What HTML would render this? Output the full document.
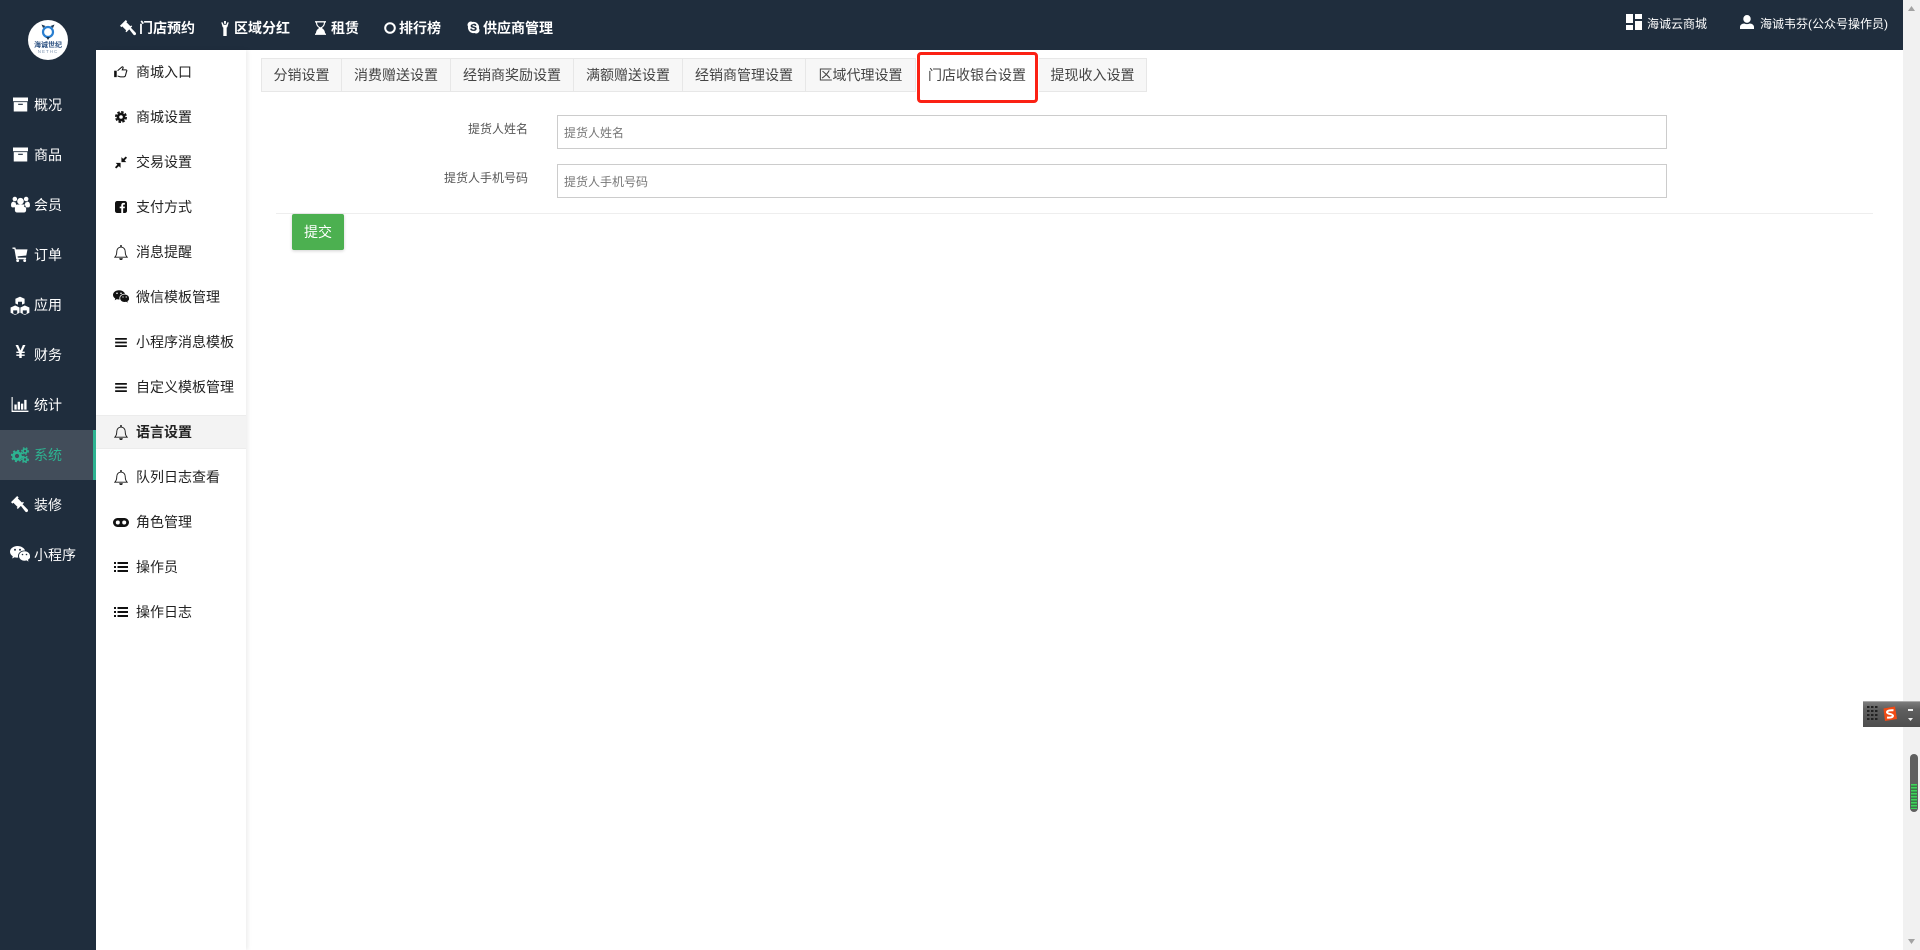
<!DOCTYPE html>
<html lang="zh-CN"><head><meta charset="utf-8"><title>语言设置</title>
<style>
*{box-sizing:border-box}
html,body{margin:0;padding:0;width:1920px;height:950px;overflow:hidden;background:#fff}
body{font-family:"Liberation Sans","Noto Sans CJK SC",sans-serif;font-size:14px;color:#333;position:relative}
.a{position:absolute;white-space:nowrap}
svg{position:absolute;display:block;overflow:visible}
#rail{left:0;top:0;width:96px;height:950px;background:#1f2d3d}
#top{left:96px;top:0;width:1807px;height:50px;background:#1f2d3d}
#sub{left:96px;top:50px;width:150px;height:900px;background:#fff;box-shadow:2px 0 4px rgba(0,0,0,.07)}
#sb{left:1903px;top:0;width:17px;height:950px;background:#f1f1f1}
.r{color:#fff;height:20px;line-height:20px;left:34px}
.t{color:#fff;font-weight:700;height:20px;line-height:20px;top:18px}
.s{color:#222;height:20px;line-height:20px;left:136px}
.w{color:#fff;font-size:12px;height:18px;line-height:18px;top:15px}
.tab{top:58px;height:34px;background:#f7f7f7;border:1px solid #e7e7e7;border-left:0;line-height:32px;text-align:center;color:#444}
.lab{font-size:12px;color:#555;height:18px;line-height:18px;text-align:right;left:400px;width:128px}
.inp{left:557px;width:1110px;height:34px;border:1px solid #ccc;background:#fff;font-size:12px;color:#777;line-height:34px;padding-left:6px}
</style></head><body>
<svg width="0" height="0" style="position:absolute">
<defs>
<symbol id="box" viewBox="0 0 16 16"><path fill="currentColor" fill-rule="evenodd" d="M0 .5h16v4H0zM.8 5.500h14.400v10H.8zM5.500 7.200v1.200h5V7.200z"/></symbol>
<symbol id="users" viewBox="0 0 20 18"><g fill="currentColor"><circle cx="10" cy="5.500" r="3.500"/><circle cx="4" cy="3.200" r="2.400"/><circle cx="16" cy="3.200" r="2.400"/><path d="M0 10c0-3 1-4 3-4 .7.8 1.500 1 2 1 0 1.500.5 3 1.500 3.800L5 12H1.500C.5 12 0 11 0 10zM20 10c0-3-1-4-3-4-.7.8-1.500 1-2 1 0 1.500-.5 3-1.500 3.800L15 12h3.500c1 0 1.500-1 1.500-2zM6 9h8c1.500 1 2 3 2 5.500 0 2-1 3-2.500 3h-7C5 17.500 4 16.500 4 14.500 4 12 4.500 10 6 9z"/></g></symbol>
<symbol id="cart" viewBox="0 0 16 16"><g fill="currentColor"><path d="M0 .5h3l.6 2H16l-1.300 6.500-9.300 1 .3 1.300H14.500V13H4L2 2H0z"/><circle cx="5.500" cy="14.500" r="1.500"/><circle cx="13" cy="14.500" r="1.500"/></g></symbol>
<symbol id="cubes" viewBox="0 0 20 20"><g fill="currentColor" stroke="#1f2d3d" stroke-width=".8"><path d="M10 .3l5 2.200v5.300l-5 2.200-5-2.200V2.500z"/><path d="M5.200 9l4.800 2.200v5.800L5.200 19.500.2 17v-5.800z"/><path d="M14.800 9l5 2.200V17l-5 2.500L10 17v-5.800z"/></g><g fill="#1f2d3d"><path d="M8 5.800h4v3.100l-2 .9-2-.9zM3.200 14.400h4v3l-2 1-2-1zM12.800 14.400h4v3l-2 1-2-1z"/></g></symbol>
<symbol id="chart" viewBox="0 0 18 16"><g fill="currentColor"><path d="M0 0h1.200v14.500H18V16H0z"/><path d="M3 8h2.500v5.500H3zM6.500 5h2.500v8.500H6.500zM10 7h2.500v6.500H10zM13.500 3h2.500v10.500H13.500z"/></g></symbol>
<symbol id="cogs" viewBox="0 0 18 16"><g fill="none" stroke="currentColor"><circle cx="6" cy="9" r="3.500" stroke-width="2.800"/><circle cx="6" cy="9" r="5.400" stroke-width="1.600" stroke-dasharray="2 2.240"/><circle cx="14" cy="4" r="2" stroke-width="1.600"/><circle cx="14" cy="4" r="3.300" stroke-width="1.200" stroke-dasharray="1.600 1.700"/><circle cx="14" cy="12.500" r="2" stroke-width="1.600"/><circle cx="14" cy="12.500" r="3.300" stroke-width="1.200" stroke-dasharray="1.600 1.700"/></g></symbol>
<symbol id="gavel" viewBox="0 0 16 16"><path fill="currentColor" d="M0 5.800L5.800 0 7.200 1.400 6.400 2.200 10.400 6.200 11.200 5.400 12.200 6.400 6.400 12.200 5.400 11.200 6.200 10.400 2.200 6.400 1.400 7.200zM9.200 9.200l1.600-1.600 4.800 5c.6.700.6 1.500 0 2.100s-1.400.6-2.100 0z"/></symbol>
<symbol id="wechat" viewBox="0 0 20 17"><g fill="currentColor"><path d="M7.500 0C3.400 0 0 2.600 0 5.800c0 1.900 1.100 3.500 2.800 4.500L2.200 12.500l2.500-1.300c.9.300 1.800.4 2.800.4h.7C8.100 11 8 10.500 8 10c0-3.100 2.900-5.500 6.500-5.500h.6C14.300 2 11.200 0 7.500 0z"/><path d="M20 10c0-2.700-2.600-4.700-5.500-4.700C11.400 5.300 9 7.300 9 10s2.400 4.700 5.500 4.700c.7 0 1.300-.1 2-.3l2 1.200-.5-1.800c1.500-1 2.500-2.300 2.500-3.800z"/></g><g fill="var(--e,#1f2d3d)"><circle cx="5" cy="3.800" r="1"/><circle cx="10" cy="3.800" r="1"/><circle cx="12.500" cy="8.500" r=".8"/><circle cx="16.500" cy="8.500" r=".8"/></g></symbol>
<symbol id="hand" viewBox="0 0 16 14"><path fill="none" stroke="currentColor" stroke-width="1.200" d="M4 5.500L9 1.200c.9-.6 1.800 0 1.500 1L9.500 4.500h4.200c1.300 0 1.500 1.500.7 2L13.500 10c-.2 1.500-1.200 2.700-2.500 2.700H7.500c-1 0-2-.7-3.500-1"/><path fill="currentColor" d="M0 5.500h3v7.500H0z"/></symbol>
<symbol id="cog" viewBox="0 0 14 14"><g fill="none" stroke="currentColor"><circle cx="7" cy="7" r="3.600" stroke-width="3"/><circle cx="7" cy="7" r="6" stroke-width="2" stroke-dasharray="3 1.712"/></g></symbol>
<symbol id="compress" viewBox="0 0 14 14"><path fill="currentColor" d="M7.500 6.500V.8L9.500 2.800 12.600 0 14 1.400 11.200 4.500 13.200 6.500zM6.500 7.500v5.700L4.500 11.200 1.400 14 0 12.600 2.800 9.500.8 7.500z"/></symbol>
<symbol id="fb" viewBox="0 0 14 14"><path fill="currentColor" fill-rule="evenodd" d="M2.500 0h9A2.500 2.500 0 0 1 14 2.500v9a2.500 2.500 0 0 1-2.500 2.500H9.500V8.500h1.800L11.600 6.500H9.500V5.200c0-.6.200-1 1-1h1.100V2.300C11.300 2.300 10.700 2.200 10 2.200c-1.600 0-2.700 1-2.700 2.800V6.500H5.500v2h1.800V14H2.500A2.500 2.500 0 0 1 0 11.500v-9A2.500 2.500 0 0 1 2.500 0z"/></symbol>
<symbol id="bell" viewBox="0 0 14 15"><g fill="none" stroke="currentColor" stroke-width=".9"><path d="M.8 12.200c1.400-1.300 2-2.900 2-5.700 0-2.500 1.800-4.400 4.200-4.400s4.200 1.900 4.200 4.400c0 2.800.6 4.400 2 5.700z"/></g><path fill="currentColor" d="M6.300 0h1.400v2H6.300zM5.200 13.200h3.600C8.800 14.300 8 15 7 15s-1.800-.7-1.800-1.800z"/></symbol>
<symbol id="bars" viewBox="0 0 13 10"><path fill="currentColor" d="M0 0h13v2H0zM0 4h13v2H0zM0 8h13v2H0z"/></symbol>
<symbol id="mask" viewBox="0 0 16 9"><path fill="currentColor" fill-rule="evenodd" d="M4.500 0h7a4.500 4.500 0 0 1 0 9h-7a4.500 4.500 0 0 1 0-9zM4.800 2.500a2 2 0 1 0 0 4 2 2 0 0 0 0-4zM11.200 2.500a2 2 0 1 0 0 4 2 2 0 0 0 0-4z"/></symbol>
<symbol id="list" viewBox="0 0 14 10"><path fill="currentColor" d="M0 0h2v2H0zM3.500 0H14v2H3.500zM0 4h2v2H0zM3.500 4H14v2H3.500zM0 8h2v2H0zM3.500 8H14v2H3.500z"/></symbol>
<symbol id="tree" viewBox="0 0 8 16"><path fill="currentColor" d="M0 1.500h1.500L2.500 4h3l1-2.500H8L6.500 6.500 5.800 7v9H2.200V7l-.7-.5z"/><path fill="currentColor" d="M3 0h2v3H3z"/></symbol>
<symbol id="hour" viewBox="0 0 12 15"><path fill="currentColor" fill-rule="evenodd" d="M0 0h12v1.500h-1C11 4 9.800 6 7.500 7.500 9.800 9 11 11 11 13.500h1V15H0v-1.500h1C1 11 2.200 9 4.500 7.500 2.200 6 1 4 1 1.500H0zM2.300 1.500c0 2.500 1.500 4.500 3.700 5.300 2.200-.8 3.700-2.800 3.700-5.300z"/></symbol>
<symbol id="skype" viewBox="0 0 14 14"><path fill="currentColor" fill-rule="evenodd" d="M7 1a6 6 0 0 1 6 6c0 .4 0 .8-.1 1.100A3.500 3.500 0 0 1 8.100 12.900 6 6 0 0 1 1.100 5.900 3.500 3.500 0 0 1 5.900 1.100C6.200 1 6.600 1 7 1zM7 3.300c-1.800 0-3.100.8-3.100 2.100 0 2.500 4.600 1.700 4.600 3 0 .5-.6.900-1.500.9-1.600 0-1.500-1.200-2.600-1.200-.5 0-.9.300-.9.800 0 1 1.500 1.800 3.500 1.800 2 0 3.400-.9 3.400-2.400C10.400 5.600 5.800 6.300 5.800 5.100c0-.4.500-.7 1.200-.7 1.400 0 1.300.9 2.200.9.500 0 .9-.3.900-.8 0-.8-1.300-1.700-3.100-1.700z"/></symbol>
</defs></svg>

<div class="a" id="rail"></div>
<div class="a" id="top"></div>
<div class="a" id="sub"></div>
<div class="a" id="sb"></div>

<!-- logo -->
<svg style="left:28px;top:20px" width="40" height="40" viewBox="0 0 40 40">
<circle cx="20" cy="20" r="20" fill="#fff"/>
<circle cx="20" cy="12" r="5" fill="none" stroke="#2a7fd0" stroke-width="2.200"/>
<path d="M13.500 4.500l4 1.500-2.500 2zM26.500 4.500l-4 1.500 2.500 2zM20 20l-2-3h4z" fill="#1a3550"/>
<text x="20" y="27" text-anchor="middle" font-size="7" font-weight="700" fill="#2a4f80" font-family="Noto Sans CJK SC,sans-serif">海诚世纪</text>
<text x="20" y="33" text-anchor="middle" font-size="4.500" letter-spacing="1" fill="#7f95b0" font-family="Liberation Sans,sans-serif">NETHC</text>
</svg>

<!-- rail active -->
<div class="a" style="left:0;top:430px;width:96px;height:50px;background:#424d5a;border-right:3px solid #2db391"></div>

<svg style="left:13px;top:97px;color:#fff" width="15" height="15"><use href="#box"/></svg><div class="a r" style="top:95px">概况</div>
<svg style="left:13px;top:147px;color:#fff" width="15" height="15"><use href="#box"/></svg><div class="a r" style="top:145px">商品</div>
<svg style="left:11px;top:196px;color:#fff" width="19" height="17"><use href="#users"/></svg><div class="a r" style="top:195px">会员</div>
<svg style="left:12px;top:247px;color:#fff" width="16" height="15"><use href="#cart"/></svg><div class="a r" style="top:245px">订单</div>
<svg style="left:10px;top:296px;color:#fff" width="20" height="20"><use href="#cubes"/></svg><div class="a r" style="top:295px">应用</div>
<div class="a" style="left:14px;top:344px;width:13px;height:20px;line-height:20px;color:#fff;font-weight:700;font-size:18px;text-align:center;transform:translateY(-2px)">¥</div><div class="a r" style="top:345px">财务</div>
<svg style="left:11px;top:397px;color:#fff" width="18" height="15"><use href="#chart"/></svg><div class="a r" style="top:395px">统计</div>
<svg style="left:11px;top:447px;color:#2db391" width="18" height="16"><use href="#cogs"/></svg><div class="a r" style="top:445px;color:#2db391">系统</div>
<svg style="left:11px;top:496px;color:#fff" width="17" height="17"><use href="#gavel"/></svg><div class="a r" style="top:495px">装修</div>
<svg style="left:10px;top:546px;color:#fff" width="20" height="17"><use href="#wechat"/></svg><div class="a r" style="top:545px">小程序</div>

<!-- top nav -->
<svg style="left:120px;top:20px;color:#fff" width="16" height="16"><use href="#gavel"/></svg><div class="a t" style="left:139px">门店预约</div>
<svg style="left:221px;top:21px;color:#fff" width="8" height="15"><use href="#tree"/></svg><div class="a t" style="left:234px">区域分红</div>
<svg style="left:315px;top:21px;color:#fff" width="11" height="14"><use href="#hour"/></svg><div class="a t" style="left:331px">租赁</div>
<svg style="left:384px;top:22px" width="12" height="12"><circle cx="6" cy="6" r="4.800" fill="none" stroke="#fff" stroke-width="2"/></svg><div class="a t" style="left:399px">排行榜</div>
<svg style="left:467px;top:21px;color:#fff" width="13" height="13"><use href="#skype"/></svg><div class="a t" style="left:483px">供应商管理</div>

<svg style="left:1626px;top:14px" width="16" height="16"><path fill="#fff" d="M0 0h7v9H0zM9 0h7v5H9zM0 11h7v5H0zM9 7h7v9H9z"/></svg>
<div class="a w" style="left:1647px">海诚云商城</div>
<svg style="left:1740px;top:15px" width="14" height="14"><path fill="#fff" d="M7 0a3.700 3.700 0 0 1 3.700 4C10.700 6 9 7.800 7 7.800S3.300 6 3.300 4A3.700 3.700 0 0 1 7 0zM0 14v-2c0-2 2-3.500 4.300-3.500 1.600.8 3.800.8 5.400 0C12 8.500 14 10 14 12v2z"/></svg>
<div class="a w" style="left:1760px">海诚韦芬(公众号操作员)</div>

<!-- sub nav -->
<div class="a" style="left:96px;top:415px;width:150px;height:34px;background:#f3f3f3;border-top:1px solid #ececec;border-bottom:1px solid #ececec"></div>
<svg style="left:114px;top:66px;color:#111" width="14" height="12"><use href="#hand"/></svg><div class="a s" style="top:62px">商城入口</div>
<svg style="left:115px;top:111px;color:#111" width="12" height="12"><use href="#cog"/></svg><div class="a s" style="top:107px">商城设置</div>
<svg style="left:115px;top:156px;color:#111" width="12" height="13"><use href="#compress"/></svg><div class="a s" style="top:152px">交易设置</div>
<svg style="left:115px;top:201px;color:#111" width="12" height="12"><use href="#fb"/></svg><div class="a s" style="top:197px">支付方式</div>
<svg style="left:114px;top:245px;color:#111" width="14" height="15"><use href="#bell"/></svg><div class="a s" style="top:242px">消息提醒</div>
<svg style="left:113px;top:290px;color:#111;--e:#fff" width="16" height="14"><use href="#wechat"/></svg><div class="a s" style="top:287px">微信模板管理</div>
<svg style="left:115px;top:338px;color:#111" width="12" height="9"><use href="#bars"/></svg><div class="a s" style="top:332px">小程序消息模板</div>
<svg style="left:115px;top:383px;color:#111" width="12" height="9"><use href="#bars"/></svg><div class="a s" style="top:377px">自定义模板管理</div>
<svg style="left:114px;top:425px;color:#111" width="14" height="15"><use href="#bell"/></svg><div class="a s" style="top:422px;font-weight:700">语言设置</div>
<svg style="left:114px;top:470px;color:#111" width="14" height="15"><use href="#bell"/></svg><div class="a s" style="top:467px">队列日志查看</div>
<svg style="left:113px;top:518px;color:#111" width="16" height="9"><use href="#mask"/></svg><div class="a s" style="top:512px">角色管理</div>
<svg style="left:114px;top:562px;color:#111" width="14" height="10"><use href="#list"/></svg><div class="a s" style="top:557px">操作员</div>
<svg style="left:114px;top:607px;color:#111" width="14" height="10"><use href="#list"/></svg><div class="a s" style="top:602px">操作日志</div>

<!-- tabs -->
<div class="a tab" style="left:261px;width:81px;border-left:1px solid #e7e7e7">分销设置</div>
<div class="a tab" style="left:342px;width:109px">消费赠送设置</div>
<div class="a tab" style="left:451px;width:123px">经销商奖励设置</div>
<div class="a tab" style="left:574px;width:109px">满额赠送设置</div>
<div class="a tab" style="left:683px;width:123px">经销商管理设置</div>
<div class="a tab" style="left:806px;width:110px">区域代理设置</div>
<div class="a tab" style="left:916px;width:123px;background:#fff;border-color:#fff">门店收银台设置</div>
<div class="a tab" style="left:1039px;width:108px">提现收入设置</div>
<div class="a" style="left:917px;top:52px;width:121px;height:51px;border:3px solid #fb2114;border-radius:4px"></div>

<!-- form -->
<div class="a lab" style="top:120px">提货人姓名</div>
<div class="a inp" style="top:115px">提货人姓名</div>
<div class="a lab" style="top:169px">提货人手机号码</div>
<div class="a inp" style="top:164px">提货人手机号码</div>
<div class="a" style="left:276px;top:213px;width:1597px;height:1px;background:#eee"></div>
<div class="a" style="left:292px;top:214px;width:52px;height:36px;background:#4cb050;border-radius:2px;color:#fff;text-align:center;line-height:37px;box-shadow:0 1px 3px rgba(0,0,0,.18)">提交</div>

<!-- scrollbar arrows -->
<svg style="left:1908px;top:6px" width="7" height="5"><path d="M3.500 0L7 5H0z" fill="#a3a3a3"/></svg>
<svg style="left:1908px;top:939px" width="7" height="5"><path d="M0 0h7L3.500 5z" fill="#a3a3a3"/></svg>

<!-- input widget -->
<div class="a" style="left:1863px;top:701px;width:57px;height:26px;background:linear-gradient(#7c7c7c,#5f5f5f 30%,#4e4e4e);border-top:1px solid #aaa"></div>
<svg style="left:1867px;top:706px" width="11" height="16"><g fill="#222"><rect x="0" y="0" width="2.500" height="2"/><rect x="4" y="0" width="2.500" height="2"/><rect x="8" y="0" width="2.500" height="2"/><rect x="0" y="4" width="2.500" height="2"/><rect x="4" y="4" width="2.500" height="2"/><rect x="8" y="4" width="2.500" height="2"/><rect x="0" y="8" width="2.500" height="2"/><rect x="4" y="8" width="2.500" height="2"/><rect x="8" y="8" width="2.500" height="2"/><rect x="0" y="12" width="2.500" height="2"/><rect x="4" y="12" width="2.500" height="2"/><rect x="8" y="12" width="2.500" height="2"/></g></svg>
<svg style="left:1882px;top:706px" width="16" height="16"><path d="M1.500 2.500L13 .5 15 13 3 15z" fill="#f04a14"/><path d="M11.500 4.300C9 4 5 4.300 5 6.200c0 2 6 1.500 6 3.600 0 1.700-3.500 2.100-6 1.700" fill="none" stroke="#fff" stroke-width="2"/></svg>
<div class="a" style="left:1908px;top:709px;width:5px;height:2px;background:#eee"></div>
<svg style="left:1908px;top:718px" width="5" height="3"><path d="M0 0h5L2.500 3z" fill="#eee"/></svg>

<div class="a" style="left:1910px;top:754px;width:8px;height:58px;background:#5f5f5f;border-radius:4px"></div>
<div class="a" style="left:1911px;top:784px;width:6px;height:25px;background:repeating-linear-gradient(#3fd45a 0 1.500px,#3a7a48 1.500px 3px)"></div>
</body></html>
